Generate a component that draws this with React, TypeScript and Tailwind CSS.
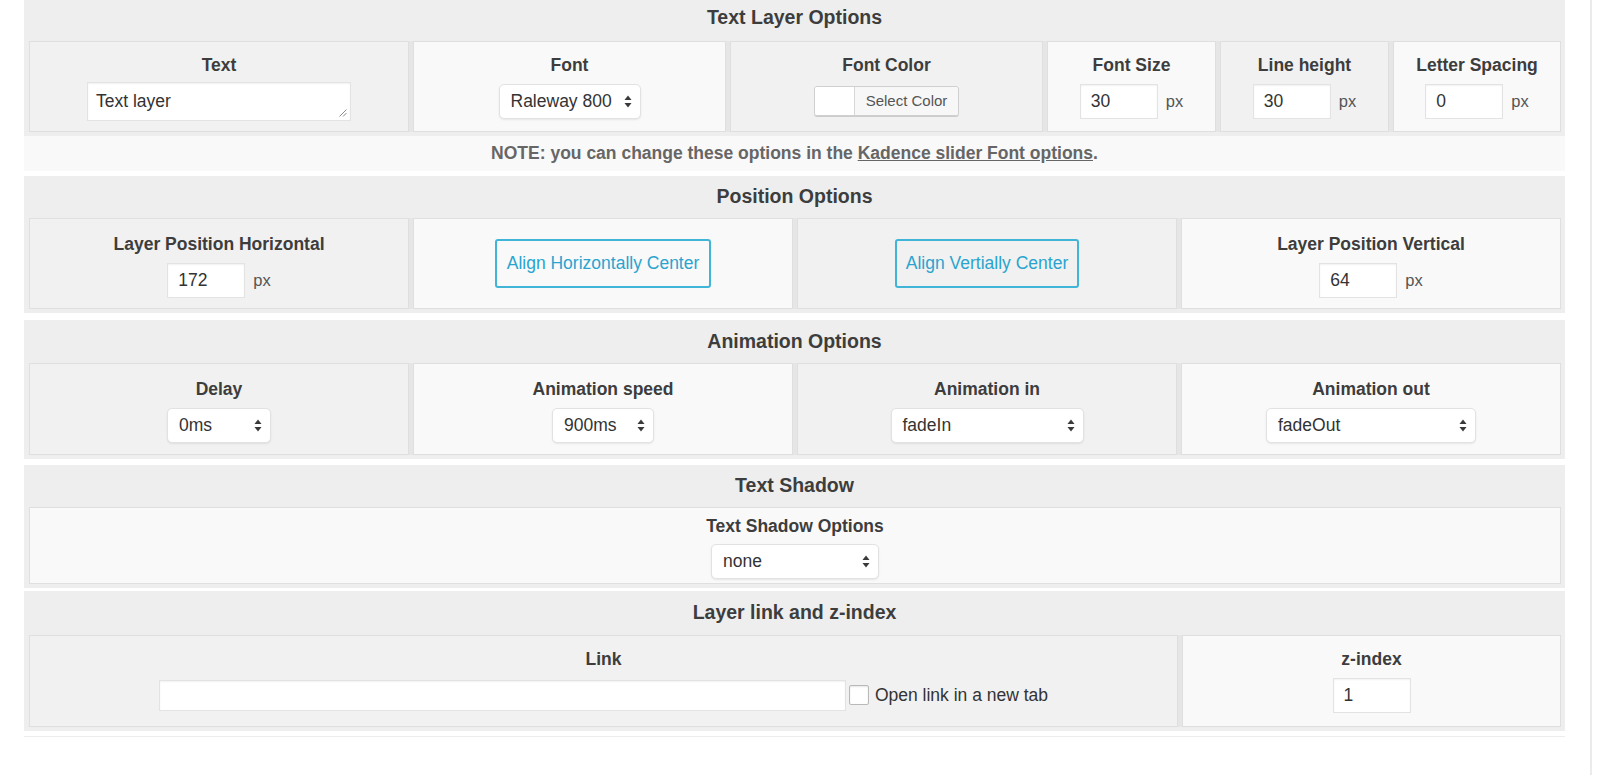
import React from 'react';

const font = "font-['Liberation_Sans',Arial,sans-serif]";

function Arrows() {
  return (
    <svg width="8" height="13" viewBox="0 0 8 13" className="shrink-0">
      <path d="M4 0.5L7.5 5H0.5z" fill="#3a3a3a" />
      <path d="M4 12.5L0.5 8h7z" fill="#3a3a3a" />
    </svg>
  );
}

function Select({ value, className }: { value: string; className: string }) {
  return (
    <div
      className={`flex items-center justify-between h-[35px] rounded-[5px] bg-white border border-[#e2e2e2] shadow-[0_1px_2px_rgba(0,0,0,0.08)] pl-[11px] pr-[8px] text-[17.5px] text-[#333] ${className}`}
    >
      <span>{value}</span>
      <Arrows />
    </div>
  );
}

function NumInput({ value, px = true }: { value: string; px?: boolean }) {
  return (
    <div className="flex items-center">
      <div className="w-[78px] h-[35px] bg-white border border-[#e3e3e3] shadow-[inset_0_1px_2px_rgba(0,0,0,0.06)] flex items-center pl-[10px] text-[17.5px] text-[#333]">
        {value}
      </div>
      {px && <span className="ml-[8px] text-[16.5px] text-[#555]">px</span>}
    </div>
  );
}

function Label({ children }: { children: React.ReactNode }) {
  return <div className="h-[22px] leading-[22px] text-[17.5px] font-bold text-[#3d3d3d] whitespace-nowrap">{children}</div>;
}

function SectionHeader({ title, className = 'h-[42px]' }: { title: string; className?: string }) {
  return (
    <div className={`flex items-center justify-center text-[19.5px] font-bold text-[#3d3d3d] ${className}`}>
      {title}
    </div>
  );
}

const darkCell = 'bg-[#f1f1f1] border border-[#dfdfdf]';
const lightCell = 'bg-[#f9f9f9] border border-[#dfdfdf]';

export default function App() {
  return (
    <div className={`${font} w-full h-[775px] bg-white flex overflow-hidden`}>
      <div className="w-[1590px] shrink-0 pl-[24px] pr-[25px]">
        {/* Text Layer Options */}
        <section className="bg-[#eeeeee] pb-[4px]">
          <SectionHeader title="Text Layer Options" className="h-[41px] pb-[5px]" />
          <div className="ml-[5px] mr-[4px] h-[91px] grid grid-cols-[380px_313px_313px_169px_169px_1fr] gap-[4px] bg-[#e6e6e6]">
            <div className={`${darkCell} flex flex-col items-center pt-[12px]`}>
              <Label>Text</Label>
              <div className="mt-[5px] h-[40px] flex items-center">
                <div className="relative w-[264px] h-[39px] bg-white border border-[#e3e3e3] shadow-[inset_0_1px_2px_rgba(0,0,0,0.06)] pl-[8px] pt-[5px] text-[17.5px] text-[#333]">
                  Text layer
                  <svg width="9" height="9" viewBox="0 0 9 9" className="absolute right-[3px] bottom-[3px]">
                    <path d="M8.5 1.5L1.5 8.5M8.5 5L5 8.5" stroke="#8a8a8a" strokeWidth="1" />
                  </svg>
                </div>
              </div>
            </div>
            <div className={`${lightCell} flex flex-col items-center pt-[12px]`}>
              <Label>Font</Label>
              <div className="mt-[5px] h-[40px] flex items-center">
                <Select value="Raleway 800" className="w-[142px] h-[34px]" />
              </div>
            </div>
            <div className={`${darkCell} flex flex-col items-center pt-[12px]`}>
              <Label>Font Color</Label>
              <div className="mt-[5px] h-[40px] flex items-center">
                <div className="flex w-[145px] h-[30px] rounded-[3px] border border-[#cfcfcf] shadow-[0_1px_0_#cccccc] overflow-hidden">
                  <div className="w-[40px] bg-white border-r border-[#d8d8d8]" />
                  <div className="flex-1 bg-[#f7f7f7] flex items-center justify-center text-[15px] text-[#555]">
                    Select Color
                  </div>
                </div>
              </div>
            </div>
            <div className={`${lightCell} flex flex-col items-center pt-[12px]`}>
              <Label>Font Size</Label>
              <div className="mt-[5px] h-[40px] flex items-center">
                <NumInput value="30" />
              </div>
            </div>
            <div className={`${darkCell} flex flex-col items-center pt-[12px]`}>
              <Label>Line height</Label>
              <div className="mt-[5px] h-[40px] flex items-center">
                <NumInput value="30" />
              </div>
            </div>
            <div className={`${lightCell} flex flex-col items-center pt-[12px]`}>
              <Label>Letter Spacing</Label>
              <div className="mt-[5px] h-[40px] flex items-center">
                <NumInput value="0" />
              </div>
            </div>
          </div>
        </section>
        <div className="h-[35px] bg-[#f9f9f9] flex items-center justify-center text-[17.5px] font-bold text-[#666]">
          NOTE: you can change these options in the&nbsp;
          <span className="underline">Kadence slider Font options</span>.
        </div>

        {/* Position Options */}
        <section className="bg-[#eeeeee] pb-[4px] mt-[5px]">
          <SectionHeader title="Position Options" />
          <div className="ml-[5px] mr-[4px] h-[91px] grid grid-cols-4 gap-[4px] bg-[#e6e6e6]">
            <div className={`${darkCell} flex flex-col items-center pt-[14px]`}>
              <Label>Layer Position Horizontal</Label>
              <div className="mt-[5px] h-[40px] flex items-center">
                <NumInput value="172" />
              </div>
            </div>
            <div className={`${lightCell} flex items-center justify-center`}>
              <button className="w-[216px] h-[49px] border-2 border-[#40b5d7] rounded-[3px] text-[17.5px] text-[#2aa4cf]">
                Align Horizontally Center
              </button>
            </div>
            <div className={`${darkCell} flex items-center justify-center`}>
              <button className="w-[184px] h-[49px] border-2 border-[#40b5d7] rounded-[3px] text-[17.5px] text-[#2aa4cf]">
                Align Vertially Center
              </button>
            </div>
            <div className={`${lightCell} flex flex-col items-center pt-[14px]`}>
              <Label>Layer Position Vertical</Label>
              <div className="mt-[5px] h-[40px] flex items-center">
                <NumInput value="64" />
              </div>
            </div>
          </div>
        </section>

        {/* Animation Options */}
        <section className="bg-[#eeeeee] pb-[4px] mt-[7px]">
          <SectionHeader title="Animation Options" className="h-[43px]" />
          <div className="ml-[5px] mr-[4px] h-[92px] grid grid-cols-4 gap-[4px] bg-[#e6e6e6]">
            <div className={`${darkCell} flex flex-col items-center pt-[14px]`}>
              <Label>Delay</Label>
              <div className="mt-[5px] h-[40px] flex items-center">
                <Select value="0ms" className="w-[104px]" />
              </div>
            </div>
            <div className={`${lightCell} flex flex-col items-center pt-[14px]`}>
              <Label>Animation speed</Label>
              <div className="mt-[5px] h-[40px] flex items-center">
                <Select value="900ms" className="w-[102px]" />
              </div>
            </div>
            <div className={`${darkCell} flex flex-col items-center pt-[14px]`}>
              <Label>Animation in</Label>
              <div className="mt-[5px] h-[40px] flex items-center">
                <Select value="fadeIn" className="w-[193px]" />
              </div>
            </div>
            <div className={`${lightCell} flex flex-col items-center pt-[14px]`}>
              <Label>Animation out</Label>
              <div className="mt-[5px] h-[40px] flex items-center">
                <Select value="fadeOut" className="w-[210px]" />
              </div>
            </div>
          </div>
        </section>

        {/* Text Shadow */}
        <section className="bg-[#eeeeee] pb-[4px] mt-[6px]">
          <SectionHeader title="Text Shadow" />
          <div className="ml-[5px] mr-[4px] h-[77px] bg-[#e6e6e6] flex">
            <div className={`${lightCell} flex-1 flex flex-col items-center pt-[7px]`}>
              <Label>Text Shadow Options</Label>
              <div className="mt-[4px] h-[40px] flex items-center">
                <Select value="none" className="w-[168px] h-[34px]" />
              </div>
            </div>
          </div>
        </section>

        {/* Layer link and z-index */}
        <section className="bg-[#eeeeee] pb-[4px] mt-[3px]">
          <SectionHeader title="Layer link and z-index" className="h-[44px]" />
          <div className="ml-[5px] mr-[4px] h-[92px] grid grid-cols-[1fr_379px] gap-[4px] bg-[#e6e6e6]">
            <div className={`${darkCell} flex flex-col items-center pt-[12px]`}>
              <Label>Link</Label>
              <div className="mt-[5px] h-[40px] flex items-center">
                <div className="w-[687px] h-[31px] bg-white border border-[#e3e3e3] shadow-[inset_0_1px_2px_rgba(0,0,0,0.06)]" />
                <div className="ml-[3px] w-[20px] h-[20px] bg-white border border-[#b9b9b9] rounded-[2px] shadow-[inset_0_1px_2px_rgba(0,0,0,0.1)]" />
                <span className="ml-[6px] text-[17.5px] text-[#333]">Open link in a new tab</span>
              </div>
            </div>
            <div className={`${lightCell} flex flex-col items-center pt-[12px]`}>
              <Label>z-index</Label>
              <div className="mt-[5px] h-[40px] flex items-center">
                <NumInput value="1" px={false} />
              </div>
            </div>
          </div>
        </section>
        <div className="mt-[5px] h-[1px] bg-[#ececec]" />
      </div>
      <div className="w-[2px] h-full bg-[#ebebeb] shrink-0" />
    </div>
  );
}
